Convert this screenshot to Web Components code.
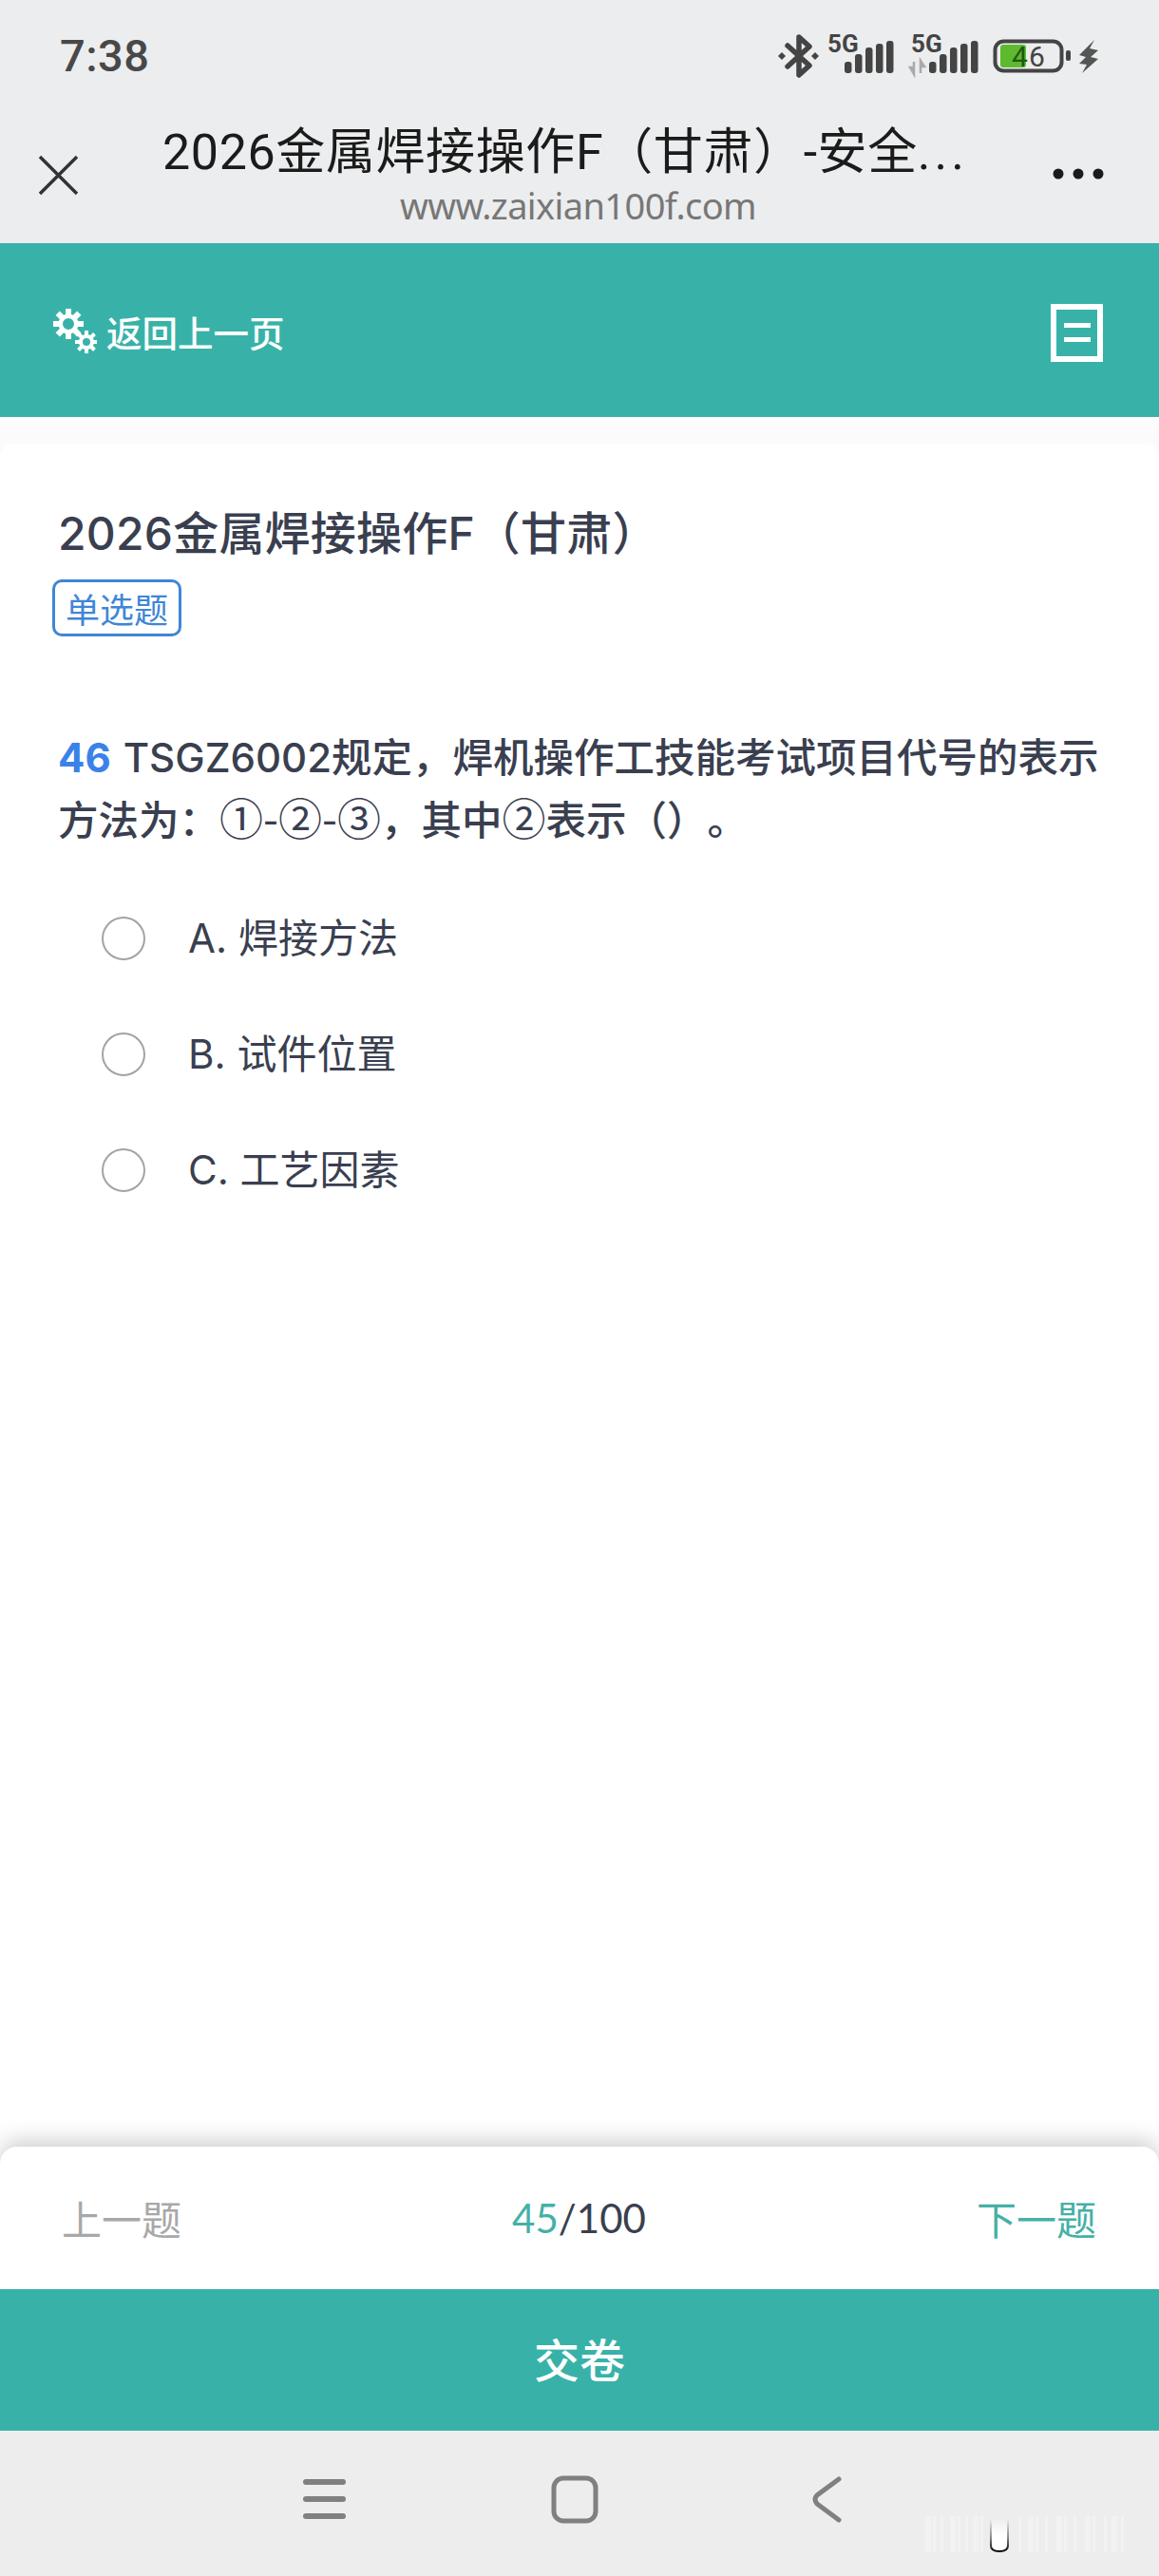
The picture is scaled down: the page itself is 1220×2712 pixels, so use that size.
<!DOCTYPE html>
<html lang="zh"><head><meta charset="utf-8"><title>考试</title>
<style>
html,body{margin:0;padding:0;background:#fff}
body{font-family:Roboto,"Noto Sans CJK SC",sans-serif}
.lat{font-family:Inter,sans-serif;font-size:42px;line-height:1}
.cir{font-size:46px;font-weight:400;line-height:1}
</style></head>
<body>
<exam-app>
  <top-chrome></top-chrome>
  <teal-bar></teal-bar>
  <exam-card>
    <span slot="title">2026金属焊接操作F（甘肃）</span>
    <span slot="badge">单选题</span>
    <span slot="num">46</span>
    <span slot="code" class="lat">TSGZ6002</span>
    <span slot="q">规定，焊机操作工技能考试项目代号的表示</span>
    <span slot="q2">方法为：</span>
    <span slot="q2" class="cir">①-②-③</span>
    <span slot="q2">，其中</span>
    <span slot="q2" class="cir">②</span>
    <span slot="q2">表示（）。</span>
    <exam-option slot="opts">A. 焊接方法</exam-option>
    <exam-option slot="opts">B. 试件位置</exam-option>
    <exam-option slot="opts">C. 工艺因素</exam-option>
  </exam-card>
  <pager-bar></pager-bar>
  <submit-bar>交卷</submit-bar>
  <nav-bar></nav-bar>
</exam-app>
<script>
const CJK='Roboto,"Noto Sans CJK SC",sans-serif';
function def(name,html){
  customElements.define(name,class extends HTMLElement{
    constructor(){super();this.attachShadow({mode:'open'}).innerHTML=html;}
  });
}
def('exam-app',`<style>:host{display:flex;flex-direction:column;width:1220px;height:2712px;overflow:hidden;background:#fff;font-family:${CJK}}</style><slot></slot>`);

const bars=(x)=>{const hs=[[0,12],[11,20],[22,27],[33,31],[44,34]];
  return hs.map(([dx,h])=>`<rect x="${x+dx}" y="${34-h}" width="7.5" height="${h}" rx="3" fill="#444"/>`).join('');};

def('top-chrome',`<style>
:host{display:block;height:256px;background:#ECEDEE;flex:none}
.status{height:100px;box-sizing:border-box;display:flex;justify-content:space-between;padding:0 63px 0 63px;align-items:flex-start}
.time{font:500 47px/1 Roboto,sans-serif;color:#484848;margin-top:35px;letter-spacing:.5px}
svg.s{margin-top:26px;display:block}
.bar{height:156px;box-sizing:border-box;display:flex;align-items:flex-start;padding:0 58px 0 40px}
.x{margin-top:63px;flex:none}
.mid{flex:1;min-width:0;display:flex;flex-direction:column;align-items:flex-start;padding-left:87px}
.t{font:400 52px/60px Roboto,"Noto Sans CJK SC",sans-serif;color:#1b1b1b;white-space:nowrap;margin-top:31px;letter-spacing:.6px}
.t b{font-weight:400;letter-spacing:4px}
.u{font:400 38px/44px "Noto Sans",Roboto,sans-serif;color:#777;margin:3px 0 0 250px;letter-spacing:-.6px}
.d{margin-top:76px;flex:none}
</style>
<div class="status"><div class="time">7:38</div>
<svg class="s" width="338" height="58" viewBox="0 -10 338 58">
  <g fill="none" stroke="#444" stroke-width="5.5" stroke-linejoin="round" stroke-linecap="round"><path d="M10 12 L33 33 L22 43 V3 L33 13 L10 34"/></g>
  <path d="M0 23 l4-4 4 4-4 4zM35 23 l4-4 4 4-4 4z" fill="#444"/>
  <text x="52" y="19" font-family="Roboto,sans-serif" font-weight="700" font-size="26" fill="#444">5G</text>
  <g transform="translate(70,7)">${bars(0)}</g>
  <text x="140" y="19" font-family="Roboto,sans-serif" font-weight="700" font-size="26" fill="#444">5G</text>
  <path d="M143 29v12M139 35l4 7v-7zM150 41V29M154 34l-4-6v6z" fill="#aaa" stroke="#aaa" stroke-width="2.5"/>
  <g transform="translate(159,7)">${bars(0)}</g>
  <rect x="228.500" y="7.500" width="70" height="31" rx="9" fill="none" stroke="#444" stroke-width="4"/>
  <rect x="234" y="11" width="27" height="24" rx="3" fill="#5DBA2F"/>
  <text x="246" y="33.500" font-family="Roboto,sans-serif" font-size="30" fill="#1f5a10" letter-spacing="1">4<tspan fill="#444">6</tspan></text>
  <rect x="303" y="17" width="5" height="11" rx="2" fill="#444"/>
  <path d="M333 6 L317 22 L324 24 L317 31 L325 32 L320 41 L337 26 L329 24 L337 17 L328 15 Z" fill="#555"/>
</svg></div>
<div class="bar">
  <svg class="x" width="44" height="44" viewBox="0 0 44 44"><path d="M2 2 L41 41 M41 2 L2 41" stroke="#333" stroke-width="3.500" fill="none"/></svg>
  <div class="mid"><div class="t">2026金属焊接操作F（甘肃）-安全<b>...</b></div><div class="u">www.zaixian100f.com</div></div>
  <svg class="d" width="54" height="14" viewBox="0 0 54 14"><circle cx="6" cy="7" r="5.500" fill="#1b1b1b"/><circle cx="27" cy="7" r="5.500" fill="#1b1b1b"/><circle cx="48" cy="7" r="5.500" fill="#1b1b1b"/></svg>
</div>`);

const gear=(cx,cy,R,r,h,n,sw)=>{let s='';for(let i=0;i<n;i++){const a=i*360/n;s+=`<rect x="${cx-sw/2}" y="${cy-R}" width="${sw}" height="${R-r+2}" transform="rotate(${a} ${cx} ${cy})" fill="#fff"/>`;}
 return s+`<circle cx="${cx}" cy="${cy}" r="${(r+h)/2}" fill="none" stroke="#fff" stroke-width="${r-h}"/>`;};

def('teal-bar',`<style>
:host{display:flex;flex:none;height:183px;background:#38B2A8;align-items:center;justify-content:space-between;padding:0 59px 0 56px;box-sizing:border-box;color:#fff}
.l{display:flex;align-items:center;gap:10px;font:500 37.500px/1 "Noto Sans CJK SC",sans-serif}
.l svg{display:block}
.l span{margin-top:2px}
.doc{width:55px;height:61px;box-sizing:border-box;border:6px solid #fff;display:flex;flex-direction:column;justify-content:center;align-items:center;gap:10px;margin-top:5px}
.doc i{display:block;width:28px;height:5px;background:#fff}
</style>
<div class="l"><svg width="46" height="48" viewBox="0 0 46 48">${gear(16,17,16,10.5,6,8,6)}${gear(35,36,12,8,4,8,4)}</svg><span>返回上一页</span></div>
<div class="doc"><i></i><i></i></div>`);

def('exam-card',`<style>
:host{display:block;flex:1;min-height:0;background:linear-gradient(#fdfdfd,#fbfbfb 24px);overflow:hidden}
.card{margin-top:28px;height:100%;background:#fff;border-radius:14px 14px 0 0;box-sizing:border-box;padding:62px 52px 0 55px;color:#3A3F50}
.title{font:500 48px/66px "Inter","Noto Sans CJK SC",sans-serif;margin-left:6px;letter-spacing:.2px}
.badge{display:inline-block;box-sizing:border-box;height:60px;width:136px;border:3px solid #3F86D6;border-radius:10px;color:#3F86D6;font:400 36px/54px "Noto Sans CJK SC",sans-serif;text-align:center;margin-top:15px;vertical-align:top}
.q{font:500 42.500px/66px "Noto Sans CJK SC",sans-serif;margin:92px 0 0 6px;height:133px;text-spacing-trim:space-all;white-space:nowrap}
.l2{display:block;height:66px}
.n{color:#3B82E8;font:700 42px/1 Inter,sans-serif;margin-right:13px}
.opts{display:flex;flex-direction:column;margin-top:32px}
</style><div class="card">
<div class="title"><slot name="title"></slot></div>
<div><span class="badge"><slot name="badge"></slot></span></div>
<div class="q"><div class="l2"><span class="n"><slot name="num"></slot></span><slot name="code"></slot><slot name="q"></slot></div><div class="l2"><slot name="q2"></slot></div></div>
<div class="opts"><slot name="opts"></slot></div>
</div>`);

def('exam-option',`<style>
:host{display:flex;align-items:center;height:122px;padding-left:52px;box-sizing:border-box;font:400 42px/1 Inter,"Noto Sans CJK SC",sans-serif;color:#3A3F50}
i{display:block;width:46px;height:46px;box-sizing:border-box;border:2.500px solid #A3A3A3;border-radius:50%;margin-right:45px;flex:none}
</style><i></i><span><slot></slot></span>`);

def('pager-bar',`<style>
:host{display:flex;flex:none;height:150px;background:#fff;border-radius:18px 18px 0 0;box-shadow:0 -6px 24px rgba(0,0,0,.2);position:relative;align-items:center;justify-content:space-between;padding:0 66px 0 65px;box-sizing:border-box;font:400 42px/1 "Noto Sans CJK SC",sans-serif}
.p{color:#A8A8A8;width:126px}.n{color:#45B0A7;width:126px;text-align:right}
.c{font:400 42px/1 Lato,Roboto,sans-serif;color:#3A3F50}.c b{font-weight:400;color:#45B0A7}
</style><span class="p">上一题</span><span class="c"><b>45</b>/100</span><span class="n">下一题</span>`);

def('submit-bar',`<style>:host{display:flex;flex:none;position:relative;height:149px;padding-bottom:6px;box-sizing:border-box;background:#38B2A8;color:#fff;align-items:center;justify-content:center;font:500 48px/1 "Noto Sans CJK SC",sans-serif}</style><slot></slot>`);

const stripes=()=>{const xs=[974,982,990,1000,1008,1016,1024,1032,1072,1082,1090,1100,1112,1120,1130,1142,1150,1162,1170,1180];return xs.map((x,i)=>`<rect x="${x}" y="2649" width="${i%3?3:6}" height="38" fill="#fff" opacity=".3"/>`).join('');};
def('nav-bar',`<style>:host{display:block;flex:none;height:153px;background:#EDEDED}svg{display:block}</style>
<svg width="1220" height="153" viewBox="0 2559 1220 153">
 <defs><linearGradient id="u" x1="0" y1="0" x2="0" y2="1"><stop offset="0" stop-color="#fff" stop-opacity="0"/><stop offset=".5" stop-color="#fff"/></linearGradient>
 <linearGradient id="e" x1="0" y1="0" x2="0" y2="1"><stop offset="0" stop-color="#111" stop-opacity="0"/><stop offset=".6" stop-color="#111" stop-opacity=".5"/><stop offset="1" stop-color="#000"/></linearGradient></defs>
 <g fill="#808080"><rect x="319" y="2610" width="45" height="6" rx="3"/><rect x="319" y="2628" width="45" height="6" rx="3"/><rect x="319" y="2646" width="45" height="6" rx="3"/></g>
 <rect x="583" y="2609" width="44" height="45" rx="10" fill="none" stroke="#808080" stroke-width="5"/>
 <path d="M883 2610 L860 2627 Q856 2631 860 2636 L883 2653" fill="none" stroke="#808080" stroke-width="5" stroke-linecap="round"/>
 ${stripes()}
 <path d="M1043 2652 V2680 Q1043 2686 1052 2686 Q1061 2686 1061 2680 V2652 Z" fill="url(#u)"/>
 <path d="M1043 2652 V2680 Q1043 2686 1052 2686 Q1061 2686 1061 2680 V2652" fill="none" stroke="url(#e)" stroke-width="2"/>
</svg>`);
</script>
</body></html>
